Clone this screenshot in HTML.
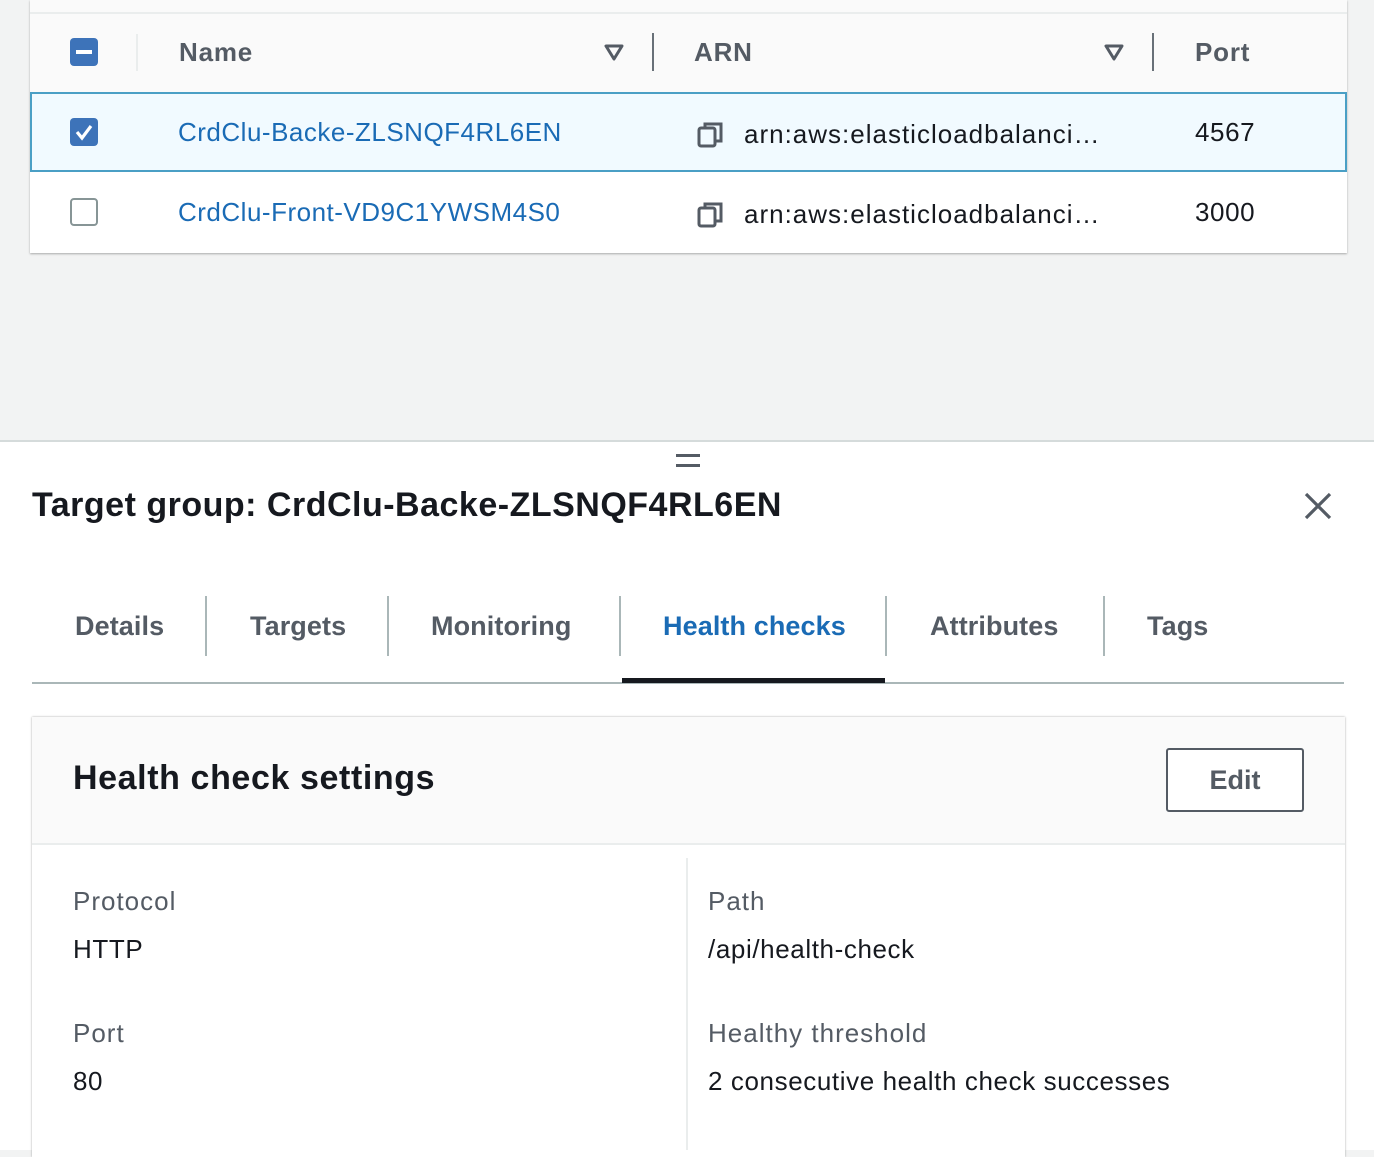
<!DOCTYPE html>
<html><head><meta charset="utf-8"><style>
*{box-sizing:border-box;margin:0;padding:0}
body{width:1374px;height:1150px;overflow:hidden;background:#f2f3f3;font-family:"Liberation Sans",Arial,sans-serif;position:relative;color:#16191f}
.a{position:absolute;white-space:nowrap}
.hdr{font-weight:bold;font-size:26px;color:#545b64;letter-spacing:0.8px}
.lnk{font-size:26px;color:#1a6bb5;letter-spacing:0.5px}
.txt{font-size:26px;color:#16191f;letter-spacing:0.6px}
.arn{font-size:26px;color:#16191f;letter-spacing:1px}
.vl{position:absolute;width:2px;background:#aab7b8}
.tab{font-weight:bold;font-size:27px;color:#545b64;letter-spacing:0.1px}
.lbl{font-size:26px;color:#545b64;letter-spacing:1px}
</style></head><body>
<div class="a" style="left:30px;top:0;width:1317px;height:253px;background:#fff;box-shadow:0 1px 2px rgba(0,0,0,.3)"></div>
<div class="a" style="left:30px;top:0;width:1317px;height:92px;background:#fafafa"></div>
<div class="a" style="left:30px;top:12px;width:1317px;height:2px;background:#eaeded"></div>
<div class="a" style="left:70px;top:38px;width:28px;height:28px;border-radius:4px;background:#3d73b9"></div>
<div class="a" style="left:76px;top:50px;width:16px;height:4px;background:#fff"></div>
<div class="vl" style="left:136px;top:34px;height:37px;background:#eaeded"></div>
<div class="a hdr" style="left:179px;top:37px">Name</div>
<svg class="a" style="left:603px;top:42px" width="22" height="20"><path d="M3 4 H19 L11 17 Z" fill="none" stroke="#545b64" stroke-width="3" stroke-linejoin="round"/></svg>
<div class="vl" style="left:652px;top:33px;height:38px;background:#687078"></div>
<div class="a hdr" style="left:694px;top:37px">ARN</div>
<svg class="a" style="left:1103px;top:42px" width="22" height="20"><path d="M3 4 H19 L11 17 Z" fill="none" stroke="#545b64" stroke-width="3" stroke-linejoin="round"/></svg>
<div class="vl" style="left:1152px;top:33px;height:38px;background:#687078"></div>
<div class="a hdr" style="left:1195px;top:37px">Port</div>
<div class="a" style="left:30px;top:92px;width:1317px;height:80px;background:#f1faff;border:2px solid #4a9fc5"></div>
<div class="a" style="left:70px;top:118px;width:28px;height:28px;background:#3d73b9;border-radius:4px"></div>
<svg class="a" style="left:70px;top:118px" width="28" height="28"><path d="M7 14 L12 20 L21 8" fill="none" stroke="#fff" stroke-width="3.2"/></svg>
<div class="a lnk" style="left:178px;top:117px">CrdClu-Backe-ZLSNQF4RL6EN</div>
<svg class="a" style="left:697px;top:120px" width="28" height="28"><rect x="2" y="8" width="16" height="18" rx="2" fill="none" stroke="#545b64" stroke-width="3"/><path d="M8 8 V4 H24 V21 H18" fill="none" stroke="#545b64" stroke-width="3"/></svg>
<div class="a arn" style="left:744px;top:119px">arn:aws:elasticloadbalanci…</div>
<div class="a txt" style="left:1195px;top:117px">4567</div>
<div class="a" style="left:70px;top:198px;width:28px;height:28px;border:2px solid #879596;border-radius:4px;background:#fff"></div>
<div class="a lnk" style="left:178px;top:197px">CrdClu-Front-VD9C1YWSM4S0</div>
<svg class="a" style="left:697px;top:200px" width="28" height="28"><rect x="2" y="8" width="16" height="18" rx="2" fill="none" stroke="#545b64" stroke-width="3"/><path d="M8 8 V4 H24 V21 H18" fill="none" stroke="#545b64" stroke-width="3"/></svg>
<div class="a arn" style="left:744px;top:199px">arn:aws:elasticloadbalanci…</div>
<div class="a txt" style="left:1195px;top:197px">3000</div>
<div class="a" style="left:0;top:440px;width:1374px;height:710px;background:#fff;border-top:2px solid #d5dbdb"></div>
<div class="a" style="left:676px;top:454px;width:24px;height:3px;background:#545b64"></div>
<div class="a" style="left:676px;top:464px;width:24px;height:3px;background:#545b64"></div>
<div class="a" style="left:32px;top:486px;font-size:34px;font-weight:bold;letter-spacing:0.5px;color:#16191f">Target group: CrdClu-Backe-ZLSNQF4RL6EN</div>
<svg class="a" style="left:1303px;top:491px" width="30" height="30"><path d="M3 3 L27 27 M27 3 L3 27" stroke="#545b64" stroke-width="3.2"/></svg>
<div class="a tab" style="left:75px;top:611px">Details</div>
<div class="vl" style="left:205px;top:596px;height:60px"></div>
<div class="a tab" style="left:250px;top:611px">Targets</div>
<div class="vl" style="left:387px;top:596px;height:60px"></div>
<div class="a tab" style="left:431px;top:611px">Monitoring</div>
<div class="vl" style="left:619px;top:596px;height:60px"></div>
<div class="a tab" style="left:663px;top:611px;color:#1a6bb5">Health checks</div>
<div class="vl" style="left:885px;top:596px;height:60px"></div>
<div class="a tab" style="left:930px;top:611px">Attributes</div>
<div class="vl" style="left:1103px;top:596px;height:60px"></div>
<div class="a tab" style="left:1147px;top:611px">Tags</div>
<div class="a" style="left:32px;top:682px;width:1312px;height:2px;background:#aab7b8"></div>
<div class="a" style="left:622px;top:678px;width:263px;height:5px;background:#16191f"></div>
<div class="a" style="left:32px;top:717px;width:1313px;height:440px;background:#fff;box-shadow:0 0 2px rgba(0,0,0,.35)"></div>
<div class="a" style="left:32px;top:717px;width:1313px;height:128px;background:#fafafa;border-bottom:2px solid #eaeded"></div>
<div class="a" style="left:73px;top:759px;font-size:34px;font-weight:bold;letter-spacing:0.6px">Health check settings</div>
<div class="a" style="left:1166px;top:748px;width:138px;height:64px;border:2px solid #545b64;border-radius:3px;background:#fff;font-weight:bold;font-size:27px;color:#545b64;text-align:center;line-height:60px">Edit</div>
<div class="a" style="left:686px;top:858px;width:2px;height:292px;background:#eaeded"></div>
<div class="a lbl" style="left:73px;top:886px">Protocol</div>
<div class="a txt" style="left:73px;top:934px">HTTP</div>
<div class="a lbl" style="left:73px;top:1018px">Port</div>
<div class="a txt" style="left:73px;top:1066px">80</div>
<div class="a lbl" style="left:708px;top:886px">Path</div>
<div class="a txt" style="left:708px;top:934px">/api/health-check</div>
<div class="a lbl" style="left:708px;top:1018px">Healthy threshold</div>
<div class="a txt" style="left:708px;top:1066px">2 consecutive health check successes</div>
</body></html>
